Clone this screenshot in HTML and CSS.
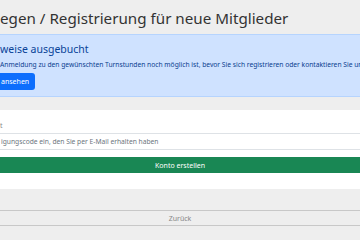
FILE: index.html
```html
<!DOCTYPE html>
<html lang="de">
<head>
    <meta charset="UTF-8">
    <meta name="viewport" content="width=device-width, initial-scale=1.0">
    <title>Registrierung für neue Mitglieder</title>
    <link rel="stylesheet" href="styles.css">
</head>
<body>
    <div class="container">
        <h1 class="page-title">egen / Registrierung für neue Mitglieder</h1>

        <div class="alert">
            <h2 class="alert-title">weise ausgebucht</h2>
            <p class="alert-text">Anmeldung zu den gewünschten Turnstunden noch möglich ist, bevor Sie sich registrieren oder kontaktieren Sie un</p>
            <button class="btn btn-primary">ansehen</button>
        </div>

        <section class="card">
            <form class="register-form">
                <label class="form-label" for="code">t</label>
                <input class="form-input" id="code" type="text" placeholder="igungscode ein, den Sie per E-Mail erhalten haben">
                <button class="btn btn-success" type="button">Konto erstellen</button>
            </form>
        </section>

        <div class="back-row">
            <button class="btn btn-back">Zurück</button>
        </div>
    </div>
</body>
</html>
```

FILE: styles.css
```css
/* Base */
* {
    margin: 0;
    padding: 0;
    box-sizing: border-box;
    font-family: 'Noto Sans', 'Open Sans', sans-serif;
}

body {
    background-color: #eeeeee;
    color: #333;
    overflow: hidden;
}

.container {
    width: 360px;
}

/* Title */
.page-title {
    font-size: 15.2px;
    font-weight: 400;
    line-height: 24px;
    padding-top: 6px;
    margin-bottom: 4px;
    white-space: nowrap;
}

/* Alert */
.alert {
    background-color: #cfe2ff;
    border-top: 1px solid #b6d4fe;
    border-bottom: 1px solid #b6d4fe;
    color: #084298;
    padding: 7px 0 6px;
    margin-bottom: 13px;
}

.alert-title {
    font-size: 10.5px;
    font-weight: 400;
    line-height: 14px;
    margin-bottom: 4px;
    white-space: nowrap;
}

.alert-text {
    font-size: 6.7px;
    line-height: 9px;
    margin-bottom: 4px;
    white-space: nowrap;
    color: #0a3d8f;
}

/* Buttons */
.btn {
    display: block;
    border: none;
    font-size: 7px;
    cursor: pointer;
}

.btn-primary {
    background-color: #0d6efd;
    color: white;
    height: 17px;
    padding: 0 6px 0 1px;
    border-radius: 0 3px 3px 0;
}

.btn-success {
    width: 100%;
    height: 16px;
    margin-top: 7px;
    background-color: #198754;
    color: white;
}

/* Card */
.card {
    background-color: white;
    padding: 11px 0 16px;
}

.form-label {
    display: block;
    font-size: 7px;
    line-height: 10px;
    color: #888;
    margin-bottom: 2px;
}

.form-input {
    display: block;
    width: 100%;
    height: 17px;
    border: 1px solid #dee2e6;
    border-left: none;
    border-right: none;
    font-size: 6.7px;
    padding: 0 1px;
    color: #555;
}

.form-input::placeholder {
    color: #6c757d;
}

/* Back */
.back-row {
    padding-top: 21px;
}

.btn-back {
    width: 100%;
    height: 16px;
    background-color: #eeeeee;
    border-top: 1px solid #c8c8c8;
    border-bottom: 1px solid #c8c8c8;
    color: #888;
}
```
